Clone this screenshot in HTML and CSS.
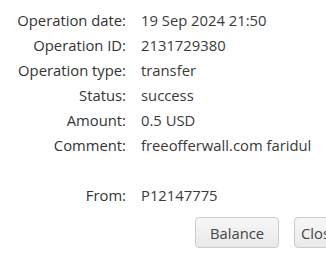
FILE: index.html
```html
<!DOCTYPE html>
<html>
<head>
<meta charset="utf-8">
<link rel="stylesheet" href="styles.css">
</head>
<body>
<div class="page">
  <div class="details">
    <div class="label">Operation date:</div><div class="value">19 Sep 2024 21:50</div>
    <div class="label">Operation ID:</div><div class="value">2131729380</div>
    <div class="label">Operation type:</div><div class="value">transfer</div>
    <div class="label">Status:</div><div class="value">success</div>
    <div class="label">Amount:</div><div class="value">0.5 USD</div>
    <div class="label">Comment:</div><div class="value">freeofferwall.com faridul</div>
    <div class="label"></div><div class="value"></div>
    <div class="label">From:</div><div class="value">P12147775</div>
  </div>
  <div class="actions">
    <button class="btn btn-balance">Balance</button>
    <button class="btn btn-close">Close</button>
  </div>
</div>
</body>
</html>
```
FILE: styles.css
```css
html, body {
  margin: 0;
  padding: 0;
  background: #fff;
  overflow: hidden;
}
.page {
  width: 326px;
  height: 265px;
  font-family: "Open Sans", sans-serif;
  font-size: 14.8px;
  color: #333;
}
.details {
  display: grid;
  grid-template-columns: 126px auto;
  column-gap: 15px;
  grid-auto-rows: 25px;
  padding-top: 8px;
  line-height: 25px;
}
.label {
  text-align: right;
  color: #333;
}
.value {
  color: #3a3a3a;
  white-space: nowrap;
}
.actions {
  display: flex;
  gap: 15px;
  padding-left: 195px;
  margin-top: 9px;
}
.btn {
  flex: none;
  height: 31px;
  font-family: inherit;
  font-size: 14.8px;
  color: #444;
  border: 1px solid #ccc;
  border-radius: 4px;
  background: linear-gradient(#f7f7f7, #e9e9e9);
  white-space: nowrap;
}
.btn-balance {
  width: 84px;
  padding: 0;
}
.btn-close {
  padding: 0 6px;
}
```
